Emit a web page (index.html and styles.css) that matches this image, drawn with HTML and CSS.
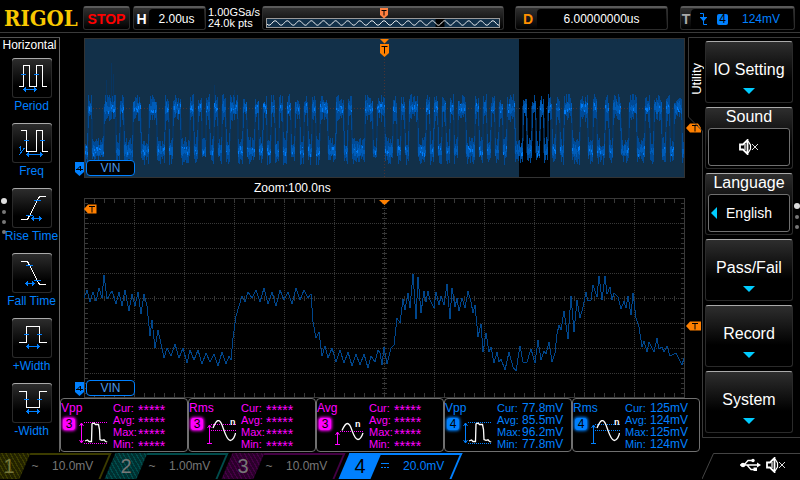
FILE: index.html
```html
<!DOCTYPE html>
<html lang="en">
<head>
  <meta charset="UTF-8">
  <meta name="viewport" content="width=device-width, initial-scale=1.0">
  <title>Oscilloscope</title>
  <link rel="stylesheet" href="styles.css">
</head>
<body>
  <!-- Shared icons -->
  <svg class="defs" width="0" height="0" aria-hidden="true">
    <symbol id="speaker" viewBox="0 0 20 16">
      <path d="M1 5.500h3L8.500 1v14L4 10.500H1z" fill="none" stroke="#fff" stroke-width="1.8"/>
      <path d="M6 5v6M9 2l2.500 4v4L9 14" fill="none" stroke="#fff" stroke-width="1.2"/>
      <path d="M13 5l6 6M19 5l-6 6" stroke="#ddd"/>
    </symbol>
    <symbol id="m-vpp" viewBox="0 0 30 26">
      <path d="M6 2.500h24M6 23.500h24" stroke="currentColor" stroke-dasharray="1 1"/>
      <path d="M3.500 3v20M1.500 6l2-3 2 3M1.500 20l2 3 2-3" fill="none" stroke="currentColor"/>
      <path d="M7 21l2.500-1 1.500 1.500h2.500L14 4l2-1 1.500 1.500h3l1 5 .5 10 2 .8 2-.5 1.500 1.700 1.700.5" fill="none" stroke="#fff" stroke-width="1.3"/>
    </symbol>
    <symbol id="m-rms" viewBox="0 0 30 26">
      <path d="M5 4.500h25M5 10.500h25" stroke="currentColor" stroke-dasharray="1 1"/>
      <path d="M3.500 5v19M1.500 8l2-3 2 3M1 23.500h5" fill="none" stroke="currentColor"/>
      <path d="M7 8C9 3 10.500.5 12.300.5 15 .5 16 5 17.500 9 19.500 15 21.500 20.500 24.300 20.500 27 20.500 29 16 29.500 13" fill="none" stroke="#fff" stroke-width="1.3"/>
    </symbol>
    <symbol id="m-avg" viewBox="0 0 30 26">
      <path d="M6 11.500h24" stroke="currentColor" stroke-dasharray="1 1"/>
      <path d="M3.500 12v12M1.500 15l2-3 2 3M1 24.500h5" fill="none" stroke="currentColor"/>
      <path d="M8 10.500C10 6 11.500 3.500 13.300 3.500 15.500 3.500 17 7 18.300 11.300 20 16 21.500 19.500 24 19.500 26.500 19.500 28 16 29 13" fill="none" stroke="#fff" stroke-width="1.3"/>
    </symbol>
  </svg>

  <header class="topbar">
    <div class="logo">RIGOL</div>
    <button type="button" class="box run-state">STOP</button>
    <div class="box readout timebase"><b>H</b><span>2.00us</span></div>
    <div class="sampling">1.00GSa/s<br>24.0k pts</div>
    <div class="box memory">
      <svg class="mem-wave" viewBox="0 0 234 9" preserveAspectRatio="none">
        <rect width="234" height="9" fill="#123049"/>
        <rect x="170" width="9" height="9" fill="#000"/>
        <path id="mem-path" fill="none" stroke="#fff"/>
      </svg>
      <svg class="mem-flag" width="8" height="11" viewBox="0 0 8 11">
        <path d="M0 0h8v7l-4 3.500L0 7z" fill="#ff8040"/>
        <path d="M1.500 2.500h5M4 2.500v5" stroke="#000"/>
      </svg>
    </div>
    <div class="box readout delay"><b>D</b><span>6.00000000us</span></div>
    <div class="box readout trigger">
      <b>T</b>
      <span>
        <svg width="10" height="12" viewBox="0 0 10 12"><path d="M1 .5h3.500v11H8M1 4.500h7" fill="none" stroke="#0080ff"/><path d="M1.500 5h6l-3 3.500z" fill="#0080ff"/></svg>
        <i class="source">4</i>
        <em>124mV</em>
      </span>
    </div>
  </header>

  <main class="main">
    <nav class="side">
      <h2>Horizontal</h2>
      <button type="button" class="tool">
        <svg viewBox="0 0 40 40"><path class="w" d="M7 28.500h4.500v-21h6v21h7v-21h6v21H35"/><path class="b" d="M9 16.500h5M22 16.500h5M12 31.500h12M14 29.500l-2 2 2 2M22 29.500l2 2-2 2"/></svg>
        <span>Period</span>
      </button>
      <button type="button" class="tool">
        <svg viewBox="0 0 40 40"><path class="w" d="M9 7.500h5.500v21h10v-21h6v21H36"/><path class="b" d="M12 17.500h5M28 17.500h5M15 31.500h15M17 29.500l-2 2 2 2M28 29.500l2 2-2 2M7 25l1.500-1.500V28M7 32l5.500-7"/></svg>
        <span>Freq</span>
      </button>
      <button type="button" class="tool">
        <svg viewBox="0 0 40 40"><path class="w" d="M9 31.500h6.500l12-23H34"/><path class="b" d="M22 12.500h7M14 27.500h7M20 30.500h9M22 28.500l-2 2 2 2M27 28.500l2 2-2 2"/></svg>
        <span>Rise Time</span>
      </button>
      <button type="button" class="tool">
        <svg viewBox="0 0 40 40"><path class="w" d="M9 8.500h6.500l12 23H34"/><path class="b" d="M14 12.500h7M22 27.500h7M14 30.500h8M16 28.500l-2 2 2 2M20 28.500l2 2-2 2"/></svg>
        <span>Fall Time</span>
      </button>
      <button type="button" class="tool">
        <svg viewBox="0 0 40 40"><path class="w" d="M7 24.500h7.500v-16h13v16H35"/><path class="b" d="M12 16.500h5M25 16.500h5M15 28.500h12M17 26.500l-2 2 2 2M25 26.500l2 2-2 2"/></svg>
        <span>+Width</span>
      </button>
      <button type="button" class="tool">
        <svg viewBox="0 0 40 40"><path class="w" d="M7 8.500h7.500v16h13v-16H35"/><path class="b" d="M12 16.500h5M25 16.500h5M15 28.500h12M17 26.500l-2 2 2 2M25 26.500l2 2-2 2"/></svg>
        <span>-Width</span>
      </button>
      <div class="dots side-dots"><i class="on"></i><i></i><i></i><i></i></div>
    </nav>

    <section class="scope">
      <div class="plot">
        <svg class="overview" viewBox="0 0 601 140" preserveAspectRatio="none">
          <rect width="601" height="140" fill="#123049"/>
          <rect x="435" width="31" height="140" fill="#000"/>
          <path d="M0 70.500h601M300.500 0v140" stroke="#4a3434" stroke-dasharray="1 2"/>
          <g id="overview-trace" fill="none"></g>
          <rect x=".5" y=".5" width="600" height="139" fill="none" stroke="#333"/>
        </svg>
        <svg class="center-flag" width="11" height="18" viewBox="0 0 11 18">
          <path d="M1 0h9L5.500 4.500zM1 5h9v9l-4.500 4L1 14z" fill="#ff8000"/>
          <path d="M2.500 7.500h6M5.500 7.500v7" stroke="#000"/>
        </svg>
        <svg class="ch-flag" width="9" height="14" viewBox="0 0 9 14"><path d="M0 0h9v10l-4.500 4L0 10z" fill="#0080ff"/><path d="M1 7.500h7M5.500 9V4L2 7.500" fill="none" stroke="#000"/></svg>
        <div class="ch-name">VIN</div>
        <svg class="level level-top" width="15" height="10" viewBox="0 0 15 10"><path d="M0 5l4-4.500h8L15 5v4.500H4z" fill="#ff8000"/><path d="M6 2.500h6M9 2.500v6" stroke="#000"/></svg>
      </div>

      <div class="zoom-label">Zoom:100.0ns</div>

      <div class="plot">
        <svg class="zoomed" viewBox="0 0 601 200" preserveAspectRatio="none">
          <g id="grid" fill="none" stroke="#383838"></g>
          <path id="zoom-trace" fill="none" stroke="#00468c"/>
        </svg>
        <svg class="center-flag" width="11" height="18" viewBox="0 0 11 18"><path d="M0 1h11L5.500 6z" fill="#ff8000"/></svg>
        <svg class="left-flag" width="13" height="10" viewBox="0 0 13 10"><path d="M0 5l4-4.500h8.500v9H4z" fill="#ff8000"/><path d="M5 2.500h6M8 2.500v6" stroke="#000"/></svg>
        <svg class="ch-flag" width="9" height="14" viewBox="0 0 9 14"><path d="M0 0h9v10l-4.500 4L0 10z" fill="#0080ff"/><path d="M1 7.500h7M5.500 9V4L2 7.500" fill="none" stroke="#000"/></svg>
        <div class="ch-name">VIN</div>
        <svg class="level level-zoom" width="15" height="10" viewBox="0 0 15 10"><path d="M0 5l4-4.500h11v9H4z" fill="#ff8000"/><path d="M6 2.500h6M9 2.500v6" stroke="#000"/></svg>
      </div>

      <div class="measures">
        <div class="measure ch3">
          <div class="kind">Vpp<i>3</i></div>
          <svg><use href="#m-vpp"/></svg>
          <dl><dt>Cur:</dt><dd class="none">*****</dd><dt>Avg:</dt><dd class="none">*****</dd><dt>Max:</dt><dd class="none">*****</dd><dt>Min:</dt><dd class="none">*****</dd></dl>
        </div>
        <div class="measure ch3">
          <div class="kind">Rms<i>3</i></div>
          <svg><use href="#m-rms"/><text class="mini" x="24" y="5">n</text></svg>
          <dl><dt>Cur:</dt><dd class="none">*****</dd><dt>Avg:</dt><dd class="none">*****</dd><dt>Max:</dt><dd class="none">*****</dd><dt>Min:</dt><dd class="none">*****</dd></dl>
        </div>
        <div class="measure ch3">
          <div class="kind">Avg<i>3</i></div>
          <svg><use href="#m-avg"/><text class="mini" x="21" y="7">n</text></svg>
          <dl><dt>Cur:</dt><dd class="none">*****</dd><dt>Avg:</dt><dd class="none">*****</dd><dt>Max:</dt><dd class="none">*****</dd><dt>Min:</dt><dd class="none">*****</dd></dl>
        </div>
        <div class="measure ch4">
          <div class="kind">Vpp<i>4</i></div>
          <svg><use href="#m-vpp"/></svg>
          <dl><dt>Cur:</dt><dd>77.8mV</dd><dt>Avg:</dt><dd>85.5mV</dd><dt>Max:</dt><dd>96.2mV</dd><dt>Min:</dt><dd>77.8mV</dd></dl>
        </div>
        <div class="measure ch4">
          <div class="kind">Rms<i>4</i></div>
          <svg><use href="#m-rms"/><text class="mini" x="24" y="5">n</text></svg>
          <dl><dt>Cur:</dt><dd>125mV</dd><dt>Avg:</dt><dd>124mV</dd><dt>Max:</dt><dd>125mV</dd><dt>Min:</dt><dd>124mV</dd></dl>
        </div>
      </div>
    </section>

    <aside class="menu">
      <svg class="menu-edge" width="112" height="401" viewBox="0 0 112 401"><path d="M112 .5H.5V80L14.500 94v306.500H112" fill="none" stroke="#3a3a3a"/></svg>
      <div class="menu-tab">Utility</div>
      <button type="button" class="key"><span>IO Setting</span><i class="down"></i></button>
      <button type="button" class="key with-value"><span>Sound</span><em><svg width="20" height="16"><use href="#speaker"/></svg></em></button>
      <button type="button" class="key with-value"><span>Language</span><em><i class="left"></i>English</em></button>
      <button type="button" class="key"><span>Pass/Fail</span><i class="down"></i></button>
      <button type="button" class="key"><span>Record</span><i class="down"></i></button>
      <button type="button" class="key"><span>System</span><i class="down"></i></button>
      <div class="dots menu-dots"><i class="on"></i><i></i><i></i></div>
    </aside>
  </main>

  <footer class="channels">
    <button type="button" class="channel c1"><b>1</b><i>~</i><span>10.0mV</span></button>
    <button type="button" class="channel c2"><b>2</b><i>~</i><span>1.00mV</span></button>
    <button type="button" class="channel c3"><b>3</b><i>~</i><span>10.0mV</span></button>
    <button type="button" class="channel c4"><b>4</b><i><svg width="8" height="6" viewBox="0 0 8 6"><path d="M0 .5h8" stroke="#0080ff"/><path d="M0 4.500h8" stroke="#0080ff" stroke-dasharray="2 1"/></svg></i><span>20.0mV</span></button>
    <div class="status">
      <svg class="status-edge" width="98" height="26" viewBox="0 0 98 26"><path d="M0 26L11.500.5H98" fill="none" stroke="#444"/></svg>
      <svg width="21" height="14" viewBox="0 0 21 14"><path d="M0 7h18M4 7l4-4.500h4M7 7l4 4.500h3" fill="none" stroke="#fff" stroke-width="1.3"/><circle cx="3" cy="7" r="2.300" fill="#fff"/><circle cx="13" cy="2.500" r="1.700" fill="#fff"/><path d="M13.500 9.500h3.500v3.500h-3.500zM17 4.500L21 7l-4 2.500z" fill="#fff"/></svg>
      <svg width="20" height="16"><use href="#speaker"/></svg>
    </div>
  </footer>

  <script src="scope.js"></script>
</body>
</html>
```

FILE: styles.css
```css
* { box-sizing: border-box; }
body {
  margin: 0;
  background: #000;
  color: #fff;
  font-family: "Liberation Sans", Arial, sans-serif;
  font-size: 12px;
  line-height: 14px;
  overflow: hidden;
}
button { font: inherit; color: inherit; border: 0; padding: 0; background: none; cursor: pointer; }
svg { display: block; }
i, em { font-style: normal; }
.defs { position: absolute; }
.mini { fill: #fff; font-size: 9px; font-weight: bold; }

/* top bar */
.topbar {
  display: flex;
  align-items: center;
  height: 33px;
  padding: 4px 5px 0 4px;
  margin-bottom: 4px;
  border-bottom: 1px solid #3a3a3a;
}
.logo {
  width: 79px;
  font-family: "DejaVu Serif Condensed", "DejaVu Serif", serif;
  font-size: 22px;
  line-height: 24px;
  font-weight: bold;
  color: #f8c800;
}
.box {
  display: flex;
  align-items: center;
  height: 24px;
  border: 1px solid #2c2c2c;
  border-top: 2px solid #5a5a5a;
  border-radius: 3px;
  background: linear-gradient(#303030, #000);
}
.run-state {
  justify-content: center;
  width: 47px;
  color: #f00;
  font-weight: bold;
  font-size: 14px;
}
.readout b { width: 15px; text-align: center; font-size: 14px; }
.readout span {
  flex: 1;
  align-self: stretch;
  display: flex;
  align-items: center;
  justify-content: center;
  margin: 1px 1px 0 0;
  border-radius: 4px 0 0 0;
  background: #000;
}
.timebase { width: 73px; margin: 0 2px 0 3px; }
.sampling { width: 54px; font-size: 11px; line-height: 11px; white-space: nowrap; }
.memory { flex: 1; position: relative; margin-right: 11px; padding: 8px 3px 0; }
.mem-wave { width: 100%; height: 10px; border: 1px solid #999; }
.mem-flag { position: absolute; left: 50%; top: 0; margin-left: -3px; }
.delay { width: 153px; margin-right: 12px; }
.delay b { width: 21px; padding-left: 3px; color: #ff9000; }
.trigger { width: 115px; color: #0080ff; }
.trigger b { width: 10px; color: #aaa; }
.trigger span { justify-content: flex-start; gap: 8px; padding-left: 8px; }
.source { width: 11px; height: 11px; line-height: 11px; border-radius: 2px; text-align: center; background: #0080ff; color: #000; }
.trigger em { margin-left: 6px; }

.main { display: grid; grid-template-columns: 60px 1fr 98px; margin-bottom: 1px; }

/* left measurement shortcuts */
.side {
  position: relative;
  display: flex;
  flex-direction: column;
  align-items: center;
  gap: 10px;
  border-top: 1px solid #555;
  border-right: 1px solid #666;
}
.side h2 { margin: 0 0 -4px; font-size: 12px; line-height: 14px; font-weight: normal; }
.tool { display: flex; flex-direction: column; align-items: center; gap: 1px; width: 56px; margin-left: 4px; color: #0080ff; white-space: nowrap; }
.tool svg {
  width: 40px;
  height: 40px;
  border-radius: 3px;
  background: linear-gradient(#2e2e2e, #000 70%);
  box-shadow: inset 0 1px #aaa, inset 0 0 0 1px #2a2a2a;
}
.w, .b { fill: none; shape-rendering: crispEdges; }
.w { stroke: #fff; }
.b { stroke: #0080ff; }
.dots { position: absolute; display: flex; flex-direction: column; align-items: center; gap: 6px; width: 6px; }
.dots i { width: 4px; height: 4px; border-radius: 50%; background: #777; }
.dots .on { width: 6px; height: 6px; background: #ddd; }
.side-dots { left: 1px; top: 160px; }
.menu-dots { right: 0; top: 166px; }

/* waveforms */
.scope { padding-top: 1px; min-width: 0; }
.plot { position: relative; margin: 0 17px 0 24px; }
.overview, .zoomed { width: 100%; shape-rendering: crispEdges; }
.overview { height: 140px; }
.zoomed { height: 200px; }
.center-flag { position: absolute; left: 50%; top: 1px; margin-left: -6px; }
.left-flag { position: absolute; left: 0; top: 6px; }
.ch-flag { position: absolute; left: -9px; bottom: 2px; }
.level { position: absolute; right: -16px; }
.level-top { top: 85px; }
.level-zoom { top: 123px; }
.ch-name {
  position: absolute;
  left: 2px;
  bottom: 2px;
  width: 49px;
  height: 16px;
  border: 1px solid #0080ff;
  border-radius: 4px;
  background: #000;
  color: #4a98e8;
  text-align: center;
}
.zoom-label { height: 20px; line-height: 20px; padding-left: 194px; }

/* measurement results */
.measures { display: grid; grid-template-columns: repeat(5, 1fr); margin-right: 2px; }
.measure {
  display: flex;
  height: 54px;
  padding-top: 3px;
  border: 1px solid #707070;
  border-radius: 4px;
  line-height: 12px;
}
.ch3 { color: #f0f; --tone: #f0f; }
.ch4 { color: #0080ff; --tone: #0080ff; }
.kind { width: 17px; }
.kind i {
  display: block;
  width: 12px;
  height: 12px;
  margin: 4px 0 0 2px;
  border-radius: 3px;
  background: var(--tone);
  box-shadow: 0 0 3px 1px var(--tone);
  color: #000;
  text-align: center;
}
.measure svg { width: 30px; height: 26px; margin: 18px 5px 0 0; flex: none; }
.measure dl { display: grid; grid-template-columns: 25px 1fr; grid-auto-rows: 12px; margin: 0; white-space: nowrap; }
.measure dt { font-size: 11px; }
.measure dd { margin: 0; }
.measure .none { font-size: 14px; line-height: 16px; }

/* soft keys */
.menu { position: relative; display: flex; flex-direction: column; gap: 4px; padding: 4px 7px 4px 3px; }
.menu-edge { position: absolute; left: -14px; top: 0; }
.menu-tab { position: absolute; left: -12px; top: 26px; font-size: 13px; writing-mode: vertical-rl; transform: rotate(180deg); }
.key {
  display: flex;
  flex-direction: column;
  align-items: center;
  height: 62px;
  padding-top: 19px;
  border: 1px solid #2a2a2a;
  border-top-color: #aaa;
  border-radius: 3px;
  background: linear-gradient(#2e2e2e, #000 65%);
  font-size: 16px;
  line-height: 18px;
}
.down { margin-top: 9px; border: 6px solid transparent; border-top-color: #0cf; border-bottom: 0; }
.with-value { padding: 0 2px 2px; }
.with-value em {
  position: relative;
  display: flex;
  align-items: center;
  justify-content: center;
  width: 100%;
  height: 38px;
  margin-top: 2px;
  border: 1px solid #707070;
  border-radius: 3px;
  background: #000;
  font-size: 14px;
}
.left { position: absolute; left: 2px; border: 6px solid transparent; border-right-color: #0cf; border-left: 0; }

/* channel strip */
.channels { display: flex; gap: 4px; height: 26px; margin-left: -7px; }
.channel { position: relative; z-index: 0; display: flex; align-items: center; width: 113px; height: 26px; color: #777; }
.channel::before, .channel::after {
  content: "";
  position: absolute;
  z-index: -1;
  top: 0;
  bottom: 0;
  left: 0;
  transform: skewX(-23deg);
}
.channel::before { right: 0; border: 2px solid var(--edge); border-left: 0; border-bottom: 0; }
.channel::after { width: 32px; background: repeating-linear-gradient(45deg, var(--fill) 0 2px, var(--edge) 2px 3px); }
.c1 { --fill: #222200; --edge: #3c3c00; }
.c2 { --fill: #003030; --edge: #004c4c; }
.c3 { --fill: #2a002a; --edge: #440044; }
.c4 { --fill: #0080ff; --edge: #0080ff; color: #0080ff; }
.channel b { width: 32px; font-size: 20px; font-weight: normal; text-align: center; }
.c1 b { color: #77773a; }
.c4 b { color: #000; }
.channel i { width: 10px; margin: 0 12px 0 5px; }
.status { position: relative; display: flex; align-items: center; gap: 5px; width: 98px; margin-left: auto; padding: 0 0 2px 38px; }
.status-edge { position: absolute; left: 0; top: 0; }
```

FILE: scope.js
```js
const svgNS = 'http://www.w3.org/2000/svg';

function addPath(parent, d, attrs) {
  const p = document.createElementNS(svgNS, 'path');
  p.setAttribute('d', d);
  for (const k in attrs) p.setAttribute(k, attrs[k]);
  parent.appendChild(p);
}

// small repeatable random generator, so the noise is stable
let seed = 7;
function rnd() {
  seed = (seed * 16807) % 2147483647;
  return seed / 2147483647;
}

// memory strip
let mem = '';
for (let x = 0; x <= 234; x++) {
  mem += (x ? 'L' : 'M') + x + ' ' + (4.5 - 2.5 * Math.cos((x - 118) * 2 * Math.PI / 12.2)).toFixed(1);
}
document.getElementById('mem-path').setAttribute('d', mem);

// overview: one symbol is about 4px wide
const bits = '0' +
  '1000111010011001100101100' + '1010101010' + '110100' + '1010101010101010' +
  '110011010001101100' + '1010110010101010110010101010110010' + '10101010' +
  '1100110100101100110010110101100110';
const isHigh = x => bits[Math.floor((x + 0.7) / 4.07)] === '1';
const soft = [], mid = [], bright = [], edge = [];
for (let x = 0; x < 600; x++) {
  const high = isHigh(x);
  const rising = high !== isHigh(x + 1);
  const falling = x > 0 && high !== isHigh(x - 1);
  const c = high ? 70 : 113;
  let a = c - 4 - rnd() * 10;
  let b = c + 4 + rnd() * 10;
  // columns beside a transition reach towards the other level
  if (rising || falling) {
    if (high) b += 4 + rnd() * 8;
    else a -= 4 + rnd() * 8;
    edge.push(`M${x + 0.5} ${rising ? '68V115' : '80V103'}`);
  }
  soft.push(`M${x + 0.5} ${a.toFixed(0)}V${b.toFixed(0)}`);
  mid.push(`M${x + 0.5} ${(c - rnd() * 7).toFixed(0)}V${(c + 1 + rnd() * 5).toFixed(0)}`);
  const y = c - 5 + rnd() * 8;
  if (rnd() > 0.55) bright.push(`M${x + 0.5} ${y.toFixed(0)}v${(1 + rnd() * 3).toFixed(0)}`);
}
edge.push('M27.500 25V70M22.500 42V70M29.500 36V70M130.500 47V70M150.500 52V70');
const trace = document.getElementById('overview-trace');
addPath(trace, edge.join(''), { stroke: '#04376c', 'stroke-opacity': 0.7 });
addPath(trace, soft.join(''), { stroke: '#004a96' });
addPath(trace, mid.join(''), { stroke: '#005cb8' });
addPath(trace, bright.join(''), { stroke: '#007cf8' });

// graticule
const grid = document.getElementById('grid');
let dots = '', ticks = 'M.5 .5H600.5V199.5H.5z';
for (let x = 50; x < 600; x += 50) dots += `M${x + 0.5} 0V200`;
for (let y = 25; y < 200; y += 25) dots += `M0 ${y + 0.5}H600`;
for (let x = 10; x < 600; x += 10) ticks += `M${x + 0.5} 1v4M${x + 0.5} 98v5M${x + 0.5} 195v4`;
for (let y = 5; y < 200; y += 5) ticks += `M1 ${y + 0.5}h3M298 ${y + 0.5}h5M597 ${y + 0.5}h3`;
addPath(grid, dots, { 'stroke-dasharray': '1 1' });
addPath(grid, ticks);

// zoomed samples, x y pairs
const samples = `0 100 3 92 6 104 9 94 12 103 15 90 18 100 20 77 23 101 28 93 32 106 35 94 38 108 41 92
  45 113 48 96 51 108 54 94 57 116 60 96 63 108 66 138 68 122 71 150 74 132 77 146 80 160 83 150 87 158
  91 146 95 160 99 150 103 165 106 152 110 162 114 152 118 166 122 155 126 164 130 156 134 168 138 154
  142 166 145 158 147 162 149 140 152 118 155 108 158 98 161 104 164 94 168 100 172 92 176 104 180 90
  184 106 188 94 192 108 196 92 200 102 204 94 208 106 212 90 216 102 220 92 224 100 227 96 229 124
  232 140 235 134 238 158 241 148 244 160 248 150 252 164 256 152 260 165 264 154 268 168 272 156 276 167
  280 156 284 170 287 158 291 164 294 152
  296 155 298 167 300 149 303 166 307 150 310 147 313 120 316 125 319 101 321 112 324 95 326 110 329 76
  332 121 334 79 337 115 340 93 342 104 344 93 346 102 350 110 352 94 355 107 357 98 360 107 363 86
  366 121 368 90 371 109 373 100 375 113 378 100 381 110 384 93 387 104 389 115 391 107 394 139 397 126
  399 154 402 135 405 154 407 149 410 165 413 154 415 164 417 161 421 172 425 154 429 169 432 173 436 148
  439 164 443 164 447 151 451 165 454 142 457 162 460 153 462 156 465 144 468 164 471 155 473 136 475 127
  477 132 480 113 484 141 487 98 490 134 493 102 496 120 499 109 502 94 504 103 507 102 509 87 513 99
  515 78 518 102 521 78 523 96 526 89 528 102 530 95 534 99 537 111 540 103 542 110 544 98 547 117 549 95
  552 120 555 129 558 149 560 143 563 154 565 144 570 154 573 140 575 151 578 149 580 154 583 148 586 158
  592 155 598 167 600 160`;
document.getElementById('zoom-trace').setAttribute('d', 'M' + samples.replace(/\s+/g, ' '));
```
